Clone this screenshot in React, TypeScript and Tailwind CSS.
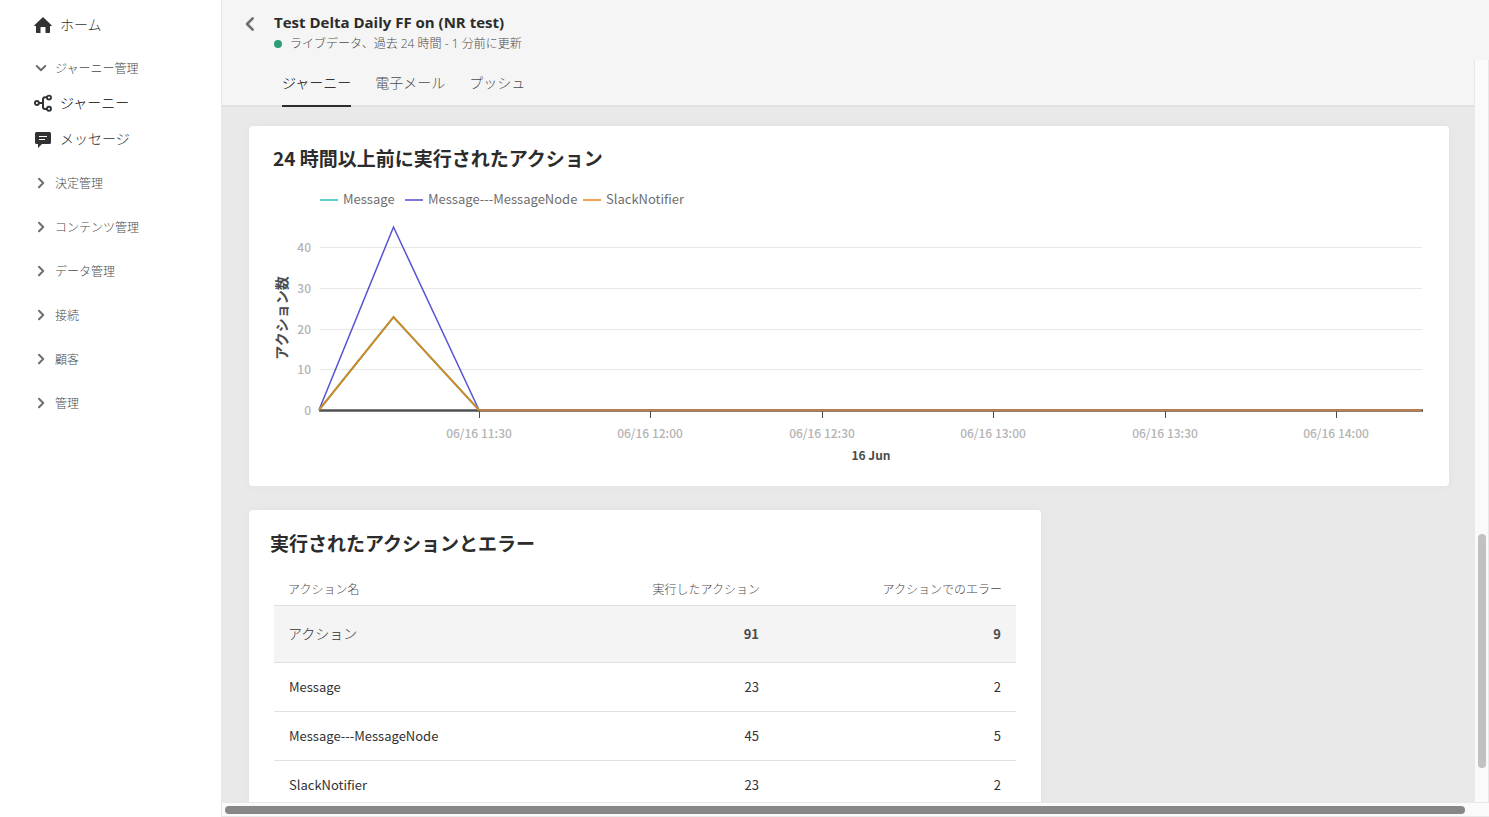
import type { ReactNode } from "react";

const sections = ["決定管理", "コンテンツ管理", "データ管理", "接続", "顧客", "管理"];

const yTicks = [
  { value: "40", y: 121 },
  { value: "30", y: 162 },
  { value: "20", y: 203 },
  { value: "10", y: 243 },
  { value: "0", y: 284 },
];

const xTicks = [
  { label: "06/16 11:30", x: 230 },
  { label: "06/16 12:00", x: 401 },
  { label: "06/16 12:30", x: 573 },
  { label: "06/16 13:00", x: 744 },
  { label: "06/16 13:30", x: 916 },
  { label: "06/16 14:00", x: 1087 },
];

const legend = [
  { name: "Message", color: "#5fcfca", x: 71 },
  { name: "Message---MessageNode", color: "#7d78dc", x: 156 },
  { name: "SlackNotifier", color: "#efa24f", x: 334 },
];

const rows = [
  { name: "Message", actions: 23, errors: 2 },
  { name: "Message---MessageNode", actions: 45, errors: 5 },
  { name: "SlackNotifier", actions: 23, errors: 2 },
];

function Chevron({ className }: { className?: string }) {
  return (
    <svg viewBox="0 0 12 12" className={className} fill="none" stroke="#6e6e6e" strokeWidth="2" strokeLinecap="round" strokeLinejoin="round" aria-hidden="true">
      <path d="M4 1.8 8.2 6 4 10.2" />
    </svg>
  );
}

function HomeIcon() {
  return (
    <svg viewBox="0 0 18 18" className="size-[18px]" fill="#323232" aria-hidden="true">
      <path d="M8.500 1.400a.7.7 0 0 1 1 0l8.100 7.900a.4.4 0 0 1-.3.7H16v6.300a.7.7 0 0 1-.7.7H11.500v-5.500a.5.5 0 0 0-.5-.5H7a.5.5 0 0 0-.5.5V17H2.700a.7.7 0 0 1-.7-.7V10H.7a.4.4 0 0 1-.3-.7z" />
    </svg>
  );
}

function JourneyIcon() {
  return (
    <svg viewBox="0 0 18 18" className="size-[18px]" fill="none" stroke="#323232" aria-hidden="true">
      <circle cx="2.900" cy="9" r="2" strokeWidth="1.900" />
      <circle cx="15" cy="3.600" r="2" strokeWidth="1.900" />
      <circle cx="15" cy="14.800" r="2" strokeWidth="1.900" />
      <path d="M5 9h4M13 3.200h-2a2 2 0 0 0-2 2v7.800a2 2 0 0 0 2 2h2" strokeWidth="2" />
    </svg>
  );
}

function MessageIcon() {
  return (
    <svg viewBox="0 0 18 18" className="size-[18px]" aria-hidden="true">
      <path d="M2.500 2h13A1.500 1.500 0 0 1 17 3.500v9a1.500 1.500 0 0 1-1.500 1.500H8l-4 4V14H2.500A1.500 1.500 0 0 1 1 12.500v-9A1.500 1.500 0 0 1 2.500 2z" fill="#323232" />
      <path d="M5 6.500h8M5 9.500h6" stroke="#fff" />
    </svg>
  );
}

function NavLink({ icon, children, active }: { icon: ReactNode; children: ReactNode; active?: boolean }) {
  return (
    <a href="#" aria-current={active ? "page" : undefined} className={`flex h-9 items-center gap-2 pl-[34px] text-sm ${active ? "text-black" : "text-[#323232]"}`}>
      {icon}
      <span className="pb-[3px] font-light">{children}</span>
    </a>
  );
}

function NavSection({ label, open }: { label: string; open?: boolean }) {
  return (
    <button type="button" aria-expanded={!!open} className="flex h-11 w-full items-center gap-2 pl-[35px] text-xs font-light text-[#4b4b4b]">
      <Chevron className={open ? "size-3 rotate-90" : "size-3"} />
      <span>{label}</span>
    </button>
  );
}

function ActionsChart() {
  return (
    <svg viewBox="0 0 1200 360" className="block w-full" role="img" aria-label="アクション数">
      <g fontSize="13" fill="#6e6e6e">
        {legend.map((l) => (
          <g key={l.name}>
            <path d={`M${l.x} 74h18`} stroke={l.color} strokeWidth="2" />
            <text x={l.x + 23} y="78">{l.name}</text>
          </g>
        ))}
      </g>
      <g fontSize="12" fontWeight="500" fill="#b3b3b3">
        {yTicks.map((t) => (
          <g key={t.value}>
            {t.value !== "0" && <path d={`M71 ${t.y + 0.5}H1173`} stroke="#e8e8e8" />}
            <text x="62" y={t.y + 5} textAnchor="end">{t.value}</text>
          </g>
        ))}
        {xTicks.map((t) => (
          <g key={t.label}>
            <path d={`M${t.x + 0.5} 285v7`} stroke="#4b4b4b" />
            <text x={t.x} y="312" textAnchor="middle">{t.label}</text>
          </g>
        ))}
      </g>
      <text transform="translate(38 192) rotate(-90)" textAnchor="middle" fontSize="14" fontWeight="700" fill="#4b4b4b">アクション数</text>
      <text x="622" y="334" textAnchor="middle" fontSize="12" fontWeight="700" fill="#4b4b4b">16 Jun</text>
      <path d="M70 284.500H1174" stroke="#505050" strokeWidth="2.500" />
      <path d="M70 284 144.500 101 230 284" fill="none" stroke="#5553d3" strokeWidth="1.500" />
      <path d="M70 284 144.500 191 230 284" fill="none" stroke="#80a36c" strokeWidth="2" />
      <path d="M70 284 144.500 191 230 284" fill="none" stroke="#da8522" strokeWidth="1.500" />
      <path d="M230 284.300H1173" stroke="#c47e45" strokeWidth="2" />
    </svg>
  );
}

function ActionsTable() {
  return (
    <table className="w-full border-collapse text-[13px] text-[#323232]">
      <thead>
        <tr className="h-8 border-b border-[#e1e1e1] text-xs whitespace-nowrap text-[#4b4b4b]">
          <th scope="col" className="px-[14px] text-left font-light">アクション名</th>
          <th scope="col" className="px-[14px] text-right font-light">実行したアクション</th>
          <th scope="col" className="w-[242px] px-[14px] text-right font-light">アクションでのエラー</th>
        </tr>
      </thead>
      <tbody>
        <tr className="h-[57px] border-b border-[#e1e1e1] bg-[#f4f4f4] text-[#4b4b4b]">
          <th scope="row" className="px-[14px] pb-[2px] text-left text-sm font-light text-[#323232]">アクション</th>
          <td className="px-[15px] text-right font-bold">91</td>
          <td className="px-[15px] text-right font-bold">9</td>
        </tr>
        {rows.map((r) => (
          <tr key={r.name} className="h-[49px] border-b border-[#e1e1e1]">
            <th scope="row" className="px-[15px] text-left font-normal">{r.name}</th>
            <td className="px-[15px] text-right">{r.actions}</td>
            <td className="px-[15px] text-right">{r.errors}</td>
          </tr>
        ))}
      </tbody>
    </table>
  );
}

export default function App() {
  return (
    <div lang="ja" className="flex h-screen overflow-hidden bg-white font-['Noto_Sans_CJK_JP',sans-serif]">
      <nav className="w-[221px] shrink-0 pt-[7px]">
        <NavLink icon={<HomeIcon />}>ホーム</NavLink>
        <div className="pt-[3px]">
          <NavSection label="ジャーニー管理" open />
          <div className="-mt-[5px] mb-1">
            <NavLink icon={<JourneyIcon />} active>ジャーニー</NavLink>
            <NavLink icon={<MessageIcon />}>メッセージ</NavLink>
          </div>
          {sections.map((s) => (
            <NavSection key={s} label={s} />
          ))}
        </div>
      </nav>

      <main className="flex min-w-0 flex-1 flex-col border-l border-[#e8e8e8] bg-[#fafafa]">
        <header className="flex h-[60px] shrink-0 gap-4 bg-[#f5f5f5] pt-3 pl-5">
          <button type="button" aria-label="戻る" className="mt-1 size-4">
            <Chevron className="size-4 rotate-180" />
          </button>
          <div>
            <h1 className="font-['Open_Sans',sans-serif] text-[15px] leading-5 font-bold text-[#2c2c2c]">Test Delta Daily FF on (NR test)</h1>
            <p className="flex items-center gap-2 pt-[2px] font-['Open_Sans','Noto_Sans_CJK_JP',sans-serif] text-xs leading-5 font-light text-[#4b4b4b]">
              <span className="size-2 rounded-full bg-[#2d9d78]" />
              ライブデータ、過去 24 時間 - 1 分前に更新
            </p>
          </div>
        </header>

        <div className="flex min-h-0 flex-1">
          <div className="flex min-w-0 flex-1 flex-col bg-[#e9e9e9]">
            <div className="flex h-[47px] shrink-0 gap-6 border-b-2 border-[#e1e1e1] bg-[#f5f5f5] pl-[60px] text-sm font-light text-[#4b4b4b]" role="tablist">
              <button type="button" role="tab" aria-selected="true" className="-mb-[2px] border-b-2 border-[#2c2c2c] pb-[2px] text-black">ジャーニー</button>
              <button type="button" role="tab" aria-selected="false" className="pb-[2px]">電子メール</button>
              <button type="button" role="tab" aria-selected="false" className="pb-[2px]">プッシュ</button>
            </div>

            <div className="flex min-h-0 flex-1 flex-col gap-6 overflow-hidden pt-[19px] pr-[25px] pl-[27px]">
              <section className="grid shrink-0 rounded bg-white shadow-[0_0_10px_rgba(0,0,0,0.04)]">
                <h2 className="col-start-1 row-start-1 self-start pt-5 pl-6 text-[19px] leading-6 font-bold text-[#2c2c2c]">24 時間以上前に実行されたアクション</h2>
                <div className="col-start-1 row-start-1">
                  <ActionsChart />
                </div>
              </section>

              <section className="w-[66%] shrink-0 rounded bg-white px-[25px] pt-[21px] shadow-[0_0_10px_rgba(0,0,0,0.04)]">
                <h2 className="-ml-1 mb-[18px] text-[19px] leading-6 font-bold text-[#2c2c2c]">実行されたアクションとエラー</h2>
                <ActionsTable />
              </section>
            </div>
          </div>
          <div className="flex w-[15px] shrink-0 flex-col items-center border-x border-[#e8e8e8]">
            <div className="grow-[474]" />
            <div className="w-2 grow-[234] rounded-full bg-[#c1c1c1]" />
            <div className="grow-[34]" />
          </div>
        </div>

        <div className="flex h-[15px] shrink-0 items-center border-y border-[#e8e8e8] pr-6 pl-[3px]">
          <div className="h-2 flex-1 rounded-full bg-[#878787]" />
        </div>
      </main>
    </div>
  );
}
